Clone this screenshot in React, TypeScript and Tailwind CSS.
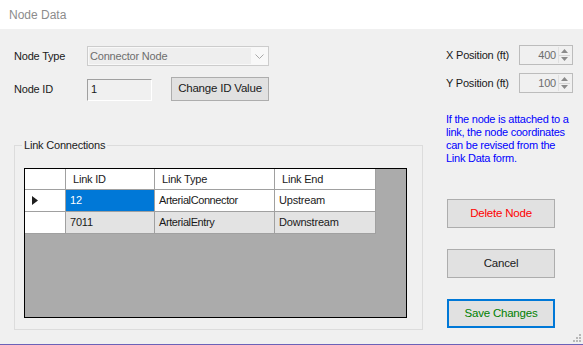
import React from 'react';

const font = "font-['Liberation_Sans',Arial,sans-serif]";

const Spinner = ({ value }: { value: string }) => (
  <div className="flex h-[20px] w-[54px] items-stretch border border-[#bcbcbc] bg-[#f0f0f0]">
    <div className="flex flex-1 items-center justify-end pr-[2px] text-[#6d6d6d]">{value}</div>
    <div className="my-[1px] mr-[2px] flex w-[12px] flex-col border-l border-[#e0e0e0]">
      <div className="flex flex-1 items-center justify-center border-b border-[#d4d4d4]">
        <svg width="7" height="4" viewBox="0 0 7 4">
          <path d="M0 4 L3.5 0 L7 4 Z" fill="#8a8a8a" />
        </svg>
      </div>
      <div className="flex flex-1 items-center justify-center">
        <svg width="7" height="4" viewBox="0 0 7 4">
          <path d="M0 0 L3.5 4 L7 0 Z" fill="#8a8a8a" />
        </svg>
      </div>
    </div>
  </div>
);

const rows = [
  { id: '12', type: 'ArterialConnector', end: 'Upstream', current: true },
  { id: '7011', type: 'ArterialEntry', end: 'Downstream', current: false },
];

const LinkGrid = () => (
  <div className="mt-[16px] ml-[9px] h-[150px] w-[383px] border border-black bg-[#ababab]">
    <div className="grid w-[351px] grid-cols-[41px_89px_120px_101px]">
      <div className="h-[21px] border-r border-b border-[#a0a0a0] bg-white" />
      <div className="flex h-[21px] items-center border-r border-b border-[#a0a0a0] bg-white pl-[7px]">Link ID</div>
      <div className="flex h-[21px] items-center border-r border-b border-[#a0a0a0] bg-white pl-[7px]">Link Type</div>
      <div className="flex h-[21px] items-center border-r border-b border-[#a0a0a0] bg-white pl-[7px]">Link End</div>
      {rows.map((r) => (
        <React.Fragment key={r.id}>
          <div className="flex h-[22px] items-center border-r border-b border-[#a0a0a0] bg-white pl-[7px]">
            {r.current && (
              <svg width="6" height="9" viewBox="0 0 6 9">
                <path d="M0 0 L6 4.5 L0 9 Z" fill="#1e1e1e" />
              </svg>
            )}
          </div>
          <div
            className={
              r.current
                ? 'flex h-[22px] items-center border-r border-b border-[#a0a0a0] bg-[#0078d7] pl-[4px] text-white'
                : 'flex h-[22px] items-center border-r border-b border-[#a0a0a0] bg-[#e3e3e3] pl-[4px]'
            }
          >
            {r.id}
          </div>
          <div
            className={
              r.current
                ? 'flex h-[22px] items-center border-r border-b border-[#a0a0a0] bg-white pl-[4px] tracking-[-0.4px]'
                : 'flex h-[22px] items-center border-r border-b border-[#a0a0a0] bg-[#e3e3e3] pl-[4px] tracking-[-0.4px]'
            }
          >
            {r.type}
          </div>
          <div
            className={
              r.current
                ? 'flex h-[22px] items-center border-r border-b border-[#a0a0a0] bg-white pl-[4px]'
                : 'flex h-[22px] items-center border-r border-b border-[#a0a0a0] bg-[#e3e3e3] pl-[4px]'
            }
          >
            {r.end}
          </div>
        </React.Fragment>
      ))}
    </div>
  </div>
);

export default function App() {
  return (
    <div className={`${font} relative flex h-[345px] w-[583px] flex-col overflow-hidden bg-[#f0f0f0] text-[11px] tracking-[-0.2px] text-[#1a1a1a]`}>
      <div className="flex h-[29px] items-center bg-white pl-[9px] text-[12px] tracking-normal text-[#8c8c8c]">Node Data</div>

      <div className="flex flex-1">
        {/* left side */}
        <div className="flex w-[423px] flex-col pt-[17px] pl-[14px]">
          <div className="flex items-center">
            <div className="w-[73px]">Node Type</div>
            <div className="flex h-[20px] w-[182px] items-center border border-[#cccccc] bg-[#f8f8f8] pl-[1px]">
              <div className="flex h-[16px] w-[162px] items-center bg-[#eeeeee] pl-[1px] text-[#6d6d6d]">Connector Node</div>
              <div className="flex flex-1 items-center justify-center">
                <svg width="9" height="5" viewBox="0 0 9 5">
                  <path d="M0.5 0.5 L4.5 4.5 L8.5 0.5" fill="none" stroke="#a8a8a8" strokeWidth="1" />
                </svg>
              </div>
            </div>
          </div>

          <div className="mt-[11px] flex items-center">
            <div className="w-[73px]">Node ID</div>
            <div className="mt-[2px] h-[22px] w-[65px] border-t border-l border-[#a0a0a0] border-r-white border-b-white border-r border-b bg-[#f0f0f0] pl-[3px] pt-[2px] leading-[14px]">
              1
            </div>
            <button className="ml-[19px] h-[24px] w-[98px] border border-[#adadad] bg-[#e1e1e1] text-[11.5px] text-[#1a1a1a]">
              Change ID Value
            </button>
          </div>

          <fieldset className="mt-[37px] h-[192px] w-[409px] border border-[#dcdcdc] px-0 pt-0">
            <legend className="ml-[7px] px-[2px] leading-[14px]">Link Connections</legend>
            <LinkGrid />
          </fieldset>
        </div>

        {/* right side */}
        <div className="ml-[23px] flex flex-col pt-[16px]">
          <div className="flex items-center">
            <div className="w-[73px]">X Position (ft)</div>
            <Spinner value="400" />
          </div>
          <div className="mt-[8px] flex items-center">
            <div className="w-[73px]">Y Position (ft)</div>
            <Spinner value="100" />
          </div>

          <div className="mt-[20px] leading-[13px] tracking-[-0.25px] text-[#0000ff]">
            <div>If the node is attached to a</div>
            <div>link, the node coordinates</div>
            <div>can be revised from the</div>
            <div>Link Data form.</div>
          </div>

          <button className="mt-[34px] ml-[1px] h-[29px] w-[108px] border border-[#adadad] bg-[#e1e1e1] text-[11.5px] text-[#ff0000]">
            Delete Node
          </button>
          <button className="mt-[21px] ml-[1px] h-[29px] w-[108px] border border-[#adadad] bg-[#e1e1e1] text-[11.5px] text-[#1a1a1a]">
            Cancel
          </button>
          <button className="mt-[21px] ml-[1px] h-[29px] w-[108px] border-2 border-[#0078d7] bg-[#e1e1e1] text-[11.5px] text-[#008000]">
            Save Changes
          </button>
        </div>
      </div>

      {/* size grip */}
      <svg className="absolute right-[2px] bottom-[3px]" width="8" height="8" viewBox="0 0 8 8">
        <rect x="6" y="0" width="2" height="2" fill="#b8b8b8" />
        <rect x="3" y="3" width="2" height="2" fill="#b8b8b8" />
        <rect x="6" y="3" width="2" height="2" fill="#b8b8b8" />
        <rect x="0" y="6" width="2" height="2" fill="#b8b8b8" />
        <rect x="3" y="6" width="2" height="2" fill="#b8b8b8" />
        <rect x="6" y="6" width="2" height="2" fill="#b8b8b8" />
      </svg>

      <div className="h-[1px] bg-[#6b62b8]" />
    </div>
  );
}
